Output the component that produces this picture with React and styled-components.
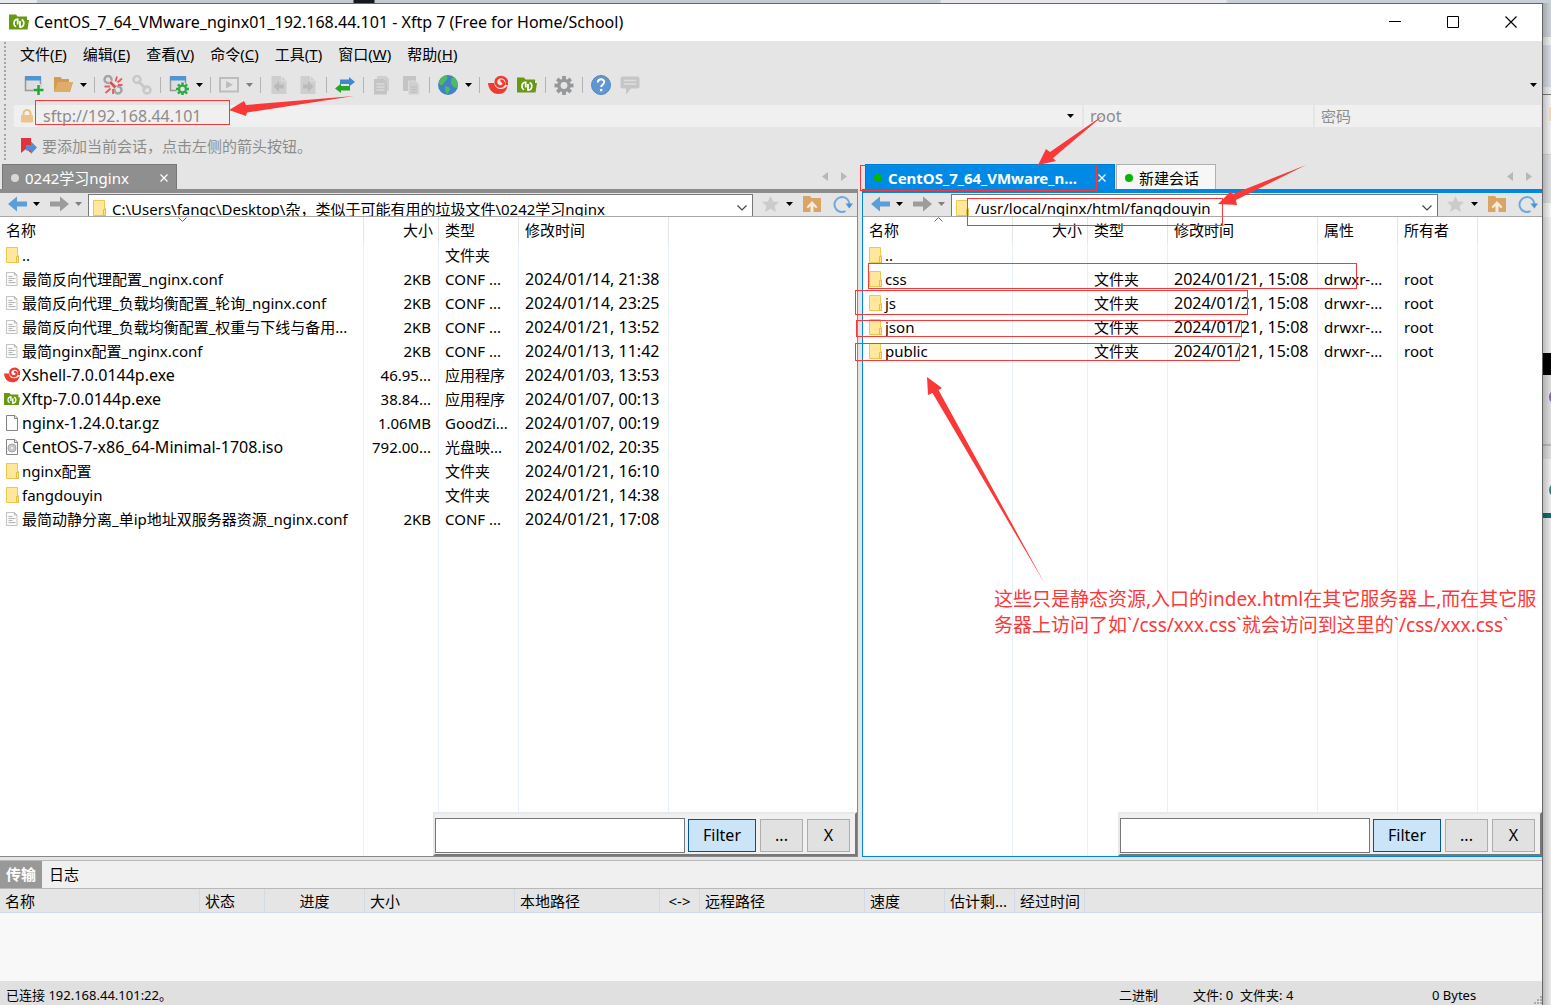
import { useState } from "react";
import styled, { createGlobalStyle } from "styled-components";

const GlobalStyle = createGlobalStyle`
  * {
    box-sizing: border-box;
  }
  body {
    margin: 0;
    overflow: hidden;
    font-family: "Noto Sans", "Noto Sans CJK SC", sans-serif;
    font-size: 15px;
    line-height: 20px;
    color: #000;
  }
  button, input {
    font: inherit;
    color: inherit;
  }
  button {
    background: none;
    border: 0;
    padding: 0;
  }
  svg {
    display: block;
    flex: none;
  }
`;

const Desktop = styled.div`
  position: relative;
  display: flex;
  height: 100vh;
  padding-top: 3px;
  overflow: hidden;
  background: linear-gradient(
    90deg,
    #e8eaed 0 36px,
    #c3cad2 38px 353px,
    #15191f 354px 374px,
    #c3cad2 375px 940px,
    #e4e6e9 941px 1226px,
    #c9cfd7 1228px
  );
`;

const AppWindow = styled.div`
  flex: 1;
  min-width: 0;
  display: flex;
  flex-direction: column;
  background: #e5e5e5;
  border-top: 1px solid #666;
  border-right: 1px solid #666;
`;

// sliver of the windows behind, right of the frame
const Behind = styled.div`
  position: relative;
  flex: none;
  width: 8px;
  overflow: hidden;
  background:
    linear-gradient(90deg, #0003, #0000),
    linear-gradient(
      #ccd2d9 0 34px,
      #eeeeee 34px 42px,
      #d6dae5 42px 84px,
      #eeeeee 84px 91px,
      #777777 91px 92px,
      #f0f0f0 92px 151px,
      #d0d0d0 151px 152px,
      #dcdee2 152px 200px,
      #f6f6f6 200px 214px,
      #ececec 214px 350px,
      #000000 350px 372px,
      #dddddd 372px 441px,
      #bbbbbb 441px 443px,
      #dddddd 443px 456px,
      #eeeeee 456px 510px,
      #0b6f6c 510px 515px,
      #eaeaea 515px
    );
`;

const Blob = styled.span`
  position: absolute;
  left: 6px;
  top: ${(p) => p.$top}px;
  width: 14px;
  height: 14px;
  border-radius: ${(p) => (p.$square ? 0 : "50%")};
  background: ${(p) => p.$color};
`;

const TitleBar = styled.header`
  display: flex;
  align-items: center;
  height: 37px;
  padding: 0 2px 2px 9px;
  gap: 5px;
  background: #fff;
`;

const Title = styled.h1`
  flex: 1;
  margin: 0;
  font-size: 16px;
  font-weight: 400;
  white-space: nowrap;
`;

const WindowButtons = styled.div`
  display: flex;
  align-self: stretch;

  button {
    display: grid;
    place-items: center;
    width: 58px;
  }
`;

const Chrome = styled.div`
  display: flex;
  height: 122px;
  padding-left: 4px;
`;

const Grips = styled.div`
  display: flex;
  flex-direction: column;
  gap: 4px;
  width: 10px;
  padding: 1px 8px 3px 0;

  span {
    background: repeating-linear-gradient(#a6a6a6 0 2px, #e5e5e5 2px 4px);
  }
  span:nth-child(1) {
    flex: 1;
  }
  span:nth-child(n + 2) {
    height: 26px;
  }
`;

const ChromeRows = styled.div`
  flex: 1;
  min-width: 0;
  padding-right: 1px;
`;

const MenuBar = styled.nav`
  display: flex;
  align-items: center;
  gap: 16px;
  height: 28px;
  padding: 0 0 2px 6px;

  button {
    white-space: nowrap;
  }
`;

const ToolBar = styled.div`
  display: flex;
  align-items: center;
  height: 36px;
  padding: 0 1px 4px 5px;
`;

const ToolButton = styled.button`
  display: flex;
  align-items: center;
  justify-content: center;
  width: 29px;
  height: 26px;
`;

const CaretButton = styled.button`
  display: flex;
  align-items: center;
  justify-content: center;
  width: ${(p) => p.$width}px;
  height: 22px;
`;

const Separator = styled.span`
  width: 8px;
  height: 16px;
  background: linear-gradient(90deg, #0000 4px, #b4b4b4 4px 5px, #0000 5px);
`;

const Spacer = styled.span`
  flex: 1;
`;

const SessionBar = styled.form`
  display: grid;
  grid-template-columns: minmax(0, 1068fr) 229px 226px;
  gap: 2px;
  height: 22px;
`;

const SessionField = styled.label`
  display: flex;
  align-items: center;
  min-width: 0;
  padding: 0 8px 0 6px;
  background: #f0f0f0;

  input {
    flex: 1;
    min-width: 0;
    height: 22px;
    padding: 0;
    border: 0;
    outline: 0;
    background: none;
    color: #8c8c8c;
    font-size: ${(p) => (p.$large ? 16 : 15)}px;
  }
  input::placeholder {
    color: #8c8c8c;
    opacity: 1;
  }
  svg + input {
    padding-left: 9px;
  }
`;

const Hint = styled.div`
  display: flex;
  align-items: center;
  gap: 5px;
  height: 36px;
  padding: 2px 0 0 7px;
  color: #8c8c8c;
`;

const Panes = styled.main`
  flex: 1;
  min-height: 0;
  display: grid;
  grid-template-columns: minmax(0, 858fr) minmax(0, 680fr);
  grid-template-rows: minmax(0, 1fr);
  gap: 4px;
`;

const PaneBox = styled.section`
  position: relative;
  display: flex;
  flex-direction: column;
  min-width: 0;
`;

const TabRow = styled.div`
  display: flex;
  align-items: flex-end;
  gap: 1px;
  height: 26px;
  padding: 0 ${(p) => (p.$active ? 10 : 11)}px 0 ${(p) => (p.$active ? 3 : 2)}px;
`;

const tabLooks = {
  grey: "background: #8f8f8f; border-color: #777; color: #fff;",
  blue: "background: #008ae5; border-color: #007acc; color: #fff; font-weight: 700;",
  plain: "background: #f7f7f7; border-color: #b0b0b0; color: #000;",
};

const Tab = styled.div`
  display: flex;
  align-items: center;
  gap: 6px;
  height: 25px;
  min-width: ${(p) => p.$width}px;
  padding: 1px 8px 0 8px;
  border: 1px solid;
  border-bottom: 0;
  white-space: nowrap;
  ${(p) => tabLooks[p.$look]}

  button:first-of-type {
    flex: 1;
    text-align: left;
  }
`;

const Dot = styled.span`
  width: 8px;
  height: 8px;
  border-radius: 50%;
  background: ${(p) => p.$color};
`;

const TabArrows = styled.div`
  display: flex;
  gap: 13px;
  align-self: center;
`;

const PaneBody = styled.div`
  flex: 1;
  min-height: 0;
  display: flex;
  flex-direction: column;
  border: 0 solid ${(p) => (p.$active ? "#0088e0" : "#888")};
  border-width: ${(p) => (p.$active ? "0 0 1px 1px" : "0 1px 1px 0")};
  border-top: 4px solid ${(p) => (p.$active ? "#0088e0" : "#8c8c8c")};
`;

const PathBar = styled.div`
  display: flex;
  flex: none;
  height: 24px;
  overflow: hidden;
  background: #e5e5e5;
  border-bottom: 1px solid #a8a8a8;
`;

const NavGroup = styled.div`
  display: flex;
  gap: ${(p) => p.$gap}px;
  padding: ${(p) => p.$pad};

  > span {
    display: flex;
  }
`;

const NavButton = styled.button`
  display: flex;
  align-items: center;
  justify-content: center;
  width: 27px;
  height: 22px;
`;

const PathBox = styled.div`
  flex: 1;
  min-width: 0;
  display: flex;
  align-items: center;
  gap: 3px;
  height: 28px;
  margin-top: 1px;
  padding: 0 5px 0 2px;
  background: #fff;
  border: 1px solid #777;

  input {
    flex: 1;
    min-width: 0;
    height: 26px;
    padding: 0;
    border: 0;
    outline: 0;
    background: none;
  }
`;

const ListArea = styled.div`
  position: relative;
  flex: 1;
  min-height: 0;
  background: #fff;
`;

const FileTable = styled.table`
  width: 100%;
  height: 100%;
  table-layout: fixed;
  border-collapse: separate;
  border-spacing: 0;

  th, td {
    height: 24px;
    padding: 0 5px 0 6px;
    border-right: 1px solid #e8f1fb;
    text-align: left;
    font-weight: 400;
    white-space: nowrap;
    overflow: hidden;
  }
  th {
    height: 26px;
    border-color: #e5e5e5;
  }
  th:nth-child(2), td:nth-child(2) {
    text-align: right;
  }
  td:nth-child(2) {
    padding-right: 7px;
  }
  td:nth-child(5) {
    font-size: 16px;
  }
  td:nth-child(4) {
    padding-right: 0;
    font-size: 16px;
  }
  td:nth-child(5) {
    font-size: 15px;
  }
  td:first-child {
    padding-right: 0;
  }
  th:last-child, td:last-child {
    border-right: 0;
  }
  tr:last-child td {
    height: auto;
  }
`;

const SortHead = styled.div`
  position: relative;
  height: 26px;
  line-height: 26px;
  margin-right: 9px;

  svg {
    position: absolute;
    top: 0;
    left: 50%;
  }
`;

const FileName = styled.div`
  display: flex;
  align-items: center;
  height: 24px;
  margin-left: -2px;
  font-size: ${(p) => (p.$large ? 16 : 15)}px;
`;

const IconSlot = styled.span`
  flex: none;
  width: 18px;
`;

const FilterBar = styled.form`
  position: absolute;
  right: 0;
  bottom: 0;
  display: flex;
  align-items: center;
  gap: 4px;
  height: 44px;
  padding: 2px 5px 0 0;
  background: #f0f0f0;
  border: 2px solid;
  border-color: #e8e8e8 #777 #777 #e8e8e8;

  input {
    width: 250px;
    height: 35px;
    margin-right: -1px;
    border: 1px solid #777;
    outline: 0;
    background: #fff;
  }
  button {
    width: 43px;
    height: 33px;
    background: #e1e1e1;
    border: 1px solid #adadad;
    font-size: 16px;
  }
  button[type="submit"] {
    width: 68px;
    background: #cce4f7;
    border-color: #005499;
  }
`;

const Transfers = styled.section`
  display: flex;
  flex-direction: column;
  height: 124px;
  padding-top: 3px;
`;

const TransferTabs = styled.div`
  display: flex;
  height: 29px;
  background: #f0f0f0;
  border: solid #b8b8b8;
  border-width: 1px 0;
`;

const TransferTab = styled.button`
  width: ${(p) => (p.$active ? 42 : 44)}px;
  padding-bottom: 2px;
  ${(p) => p.$active && "background: #999; color: #fff; font-weight: 700;"}
`;

const TransferTable = styled.table`
  width: 100%;
  table-layout: fixed;
  border-spacing: 0;

  th {
    height: 24px;
    padding: 0 0 0 5px;
    border-right: 1px solid #d0dae8;
    border-bottom: 1px solid #d0dae8;
    font-weight: 400;
    text-align: left;
    white-space: nowrap;
  }
  th:nth-child(3), th:nth-child(6) {
    padding: 0;
    text-align: center;
  }
  th:last-child {
    border-right: 0;
  }
`;

const TransferBody = styled.div`
  flex: 1;
  background: #f8f8f8;
`;

const StatusBar = styled.footer`
  display: grid;
  grid-template-columns: minmax(0, 1fr) 74px 239px 110px;
  align-items: center;
  height: 24px;
  padding: 4px 0 0 6px;
  background: #e0e0e0;
  font-size: 13px;
  white-space: pre;

  svg {
    position: absolute;
    right: 9px;
    bottom: 0;
  }
`;

const Notes = styled.div`
  position: absolute;
  inset: 0;
  pointer-events: none;
  color: #fb3838;

  > svg {
    position: absolute;
    inset: 0;
  }
`;

const Frame = styled.div`
  position: absolute;
  left: ${(p) => p.$x}px;
  top: ${(p) => p.$y}px;
  width: ${(p) => p.$w}px;
  height: ${(p) => p.$h}px;
  border: 1px solid #fb3838;
`;

const NoteText = styled.p`
  position: absolute;
  left: 994px;
  top: 586px;
  margin: 0;
  font-size: 19px;
  line-height: 26px;
  white-space: nowrap;
`;

/* ---------- icons ---------- */

const Svg = ({ w = 20, h = 20, box, children }) => (
  <svg width={w} height={h} viewBox={box || `0 0 ${w} ${h}`} fill="none" aria-hidden="true">
    {children}
  </svg>
);

const Caret = ({ color = "#000" }) => (
  <Svg w={7} h={4}>
    <path d="M0 0h7L3.500 4z" fill={color} />
  </Svg>
);

const Chevron = () => (
  <Svg w={10} h={6}>
    <path d="M.5.5 5 5 9.5.5" stroke="#444" strokeWidth="1.200" />
  </Svg>
);

const XftpIcon = ({ size = 20 }) => (
  <Svg w={size} h={size} box="0 0 20 20">
    <path d="M0 2.500h7l1.500 2H18v3.500h2l-1.500 9.500H0z" fill="#669a12" />
    <path d="M8.500 7.300C4.500 7.300 3.800 13 7 14.600" stroke="#fff" strokeWidth="1.600" />
    <path d="M8.700 6.500v6M11 9v6.800" stroke="#fff" strokeWidth="1.800" />
    <path d="M11 15.300c4.200 0 5.200-5.800 1.700-7.800" stroke="#fff" strokeWidth="1.600" />
  </Svg>
);

const XshellIcon = ({ size = 20 }) => (
  <Svg w={size} h={size} box="0 0 20 20">
    <path
      d="M0 8h6.200c.4 4.200 3.400 6 6.800 6 2.800 0 5-1.200 6.500-3.500C19 15.800 15.500 19 10.500 19 4 19 .5 14 0 8z"
      fill="#f0392f"
    />
    <path
      d="M18.600 10C20 5 16.500 1.800 13 2c-4.200.3-6 3.600-4.800 6.800 1.200 3 5.400 3.600 7 1.500 1.500-2.200-.2-4.900-2.700-4.200"
      stroke="#f0392f"
      strokeWidth="2.700"
    />
  </Svg>
);

const FolderIcon = () => (
  <Svg w={18} h={18}>
    <path d="M2.500 1.500h11v8h1v7h-12z" fill="#ffe79b" stroke="#edc84f" />
    <path d="M12.500 16.500v-6h2v6z" fill="#ffe290" stroke="#e4bd45" />
  </Svg>
);

const TextFileIcon = () => (
  <Svg w={18} h={18}>
    <path d="M2.500 2.500h8l2.500 2.500v10.500H2.500z" fill="#fafafa" stroke="#c2c2c2" />
    <path d="M10.500 2.500V5H13M4.500 6.500h4M4.500 8.500h7M4.500 10.500h4M4.500 12.500h7" stroke="#b4b4b4" />
  </Svg>
);

const BlankFileIcon = ({ disc }) => (
  <Svg w={18} h={18}>
    <path d="M2.500 1.500h8.500l2.500 2.500v12.500h-11z" fill="#fcfcfc" stroke="#858585" />
    <path d="M10.500 1.500v3h3" stroke="#858585" />
    {disc && (
      <>
        <circle cx="8" cy="10" r="4" fill="#c6c9cc" stroke="#a3a3a3" />
        <circle cx="8" cy="10" r="1.200" fill="#eee" />
      </>
    )}
  </Svg>
);

const fileIcons = {
  folder: <FolderIcon />,
  text: <TextFileIcon />,
  xshell: <XshellIcon size={16} />,
  xftp: <XftpIcon size={16} />,
  blank: <BlankFileIcon />,
  iso: <BlankFileIcon disc />,
};

// teeth laid round a ring, used by both gear icons
const Gear = ({ cx, cy, r, color, hole }) => (
  <g>
    {[0, 45, 90, 135].map((a) => (
      <rect
        key={a}
        x={cx - r * 0.2}
        y={cy - r}
        width={r * 0.4}
        height={r * 2}
        fill={color}
        transform={`rotate(${a} ${cx} ${cy})`}
      />
    ))}
    <circle cx={cx} cy={cy} r={r * 0.7} fill={color} />
    <circle cx={cx} cy={cy} r={r * 0.36} fill={hole} />
  </g>
);

const WindowShape = () => (
  <>
    <path d="M1.500 2.500h15v13h-15z" fill="#dedede" stroke="#999" strokeWidth="1.500" />
    <path d="M1 1h16v4.500H1z" fill="#4f95d3" />
  </>
);

const NewSessionIcon = () => (
  <Svg>
    <WindowShape />
    <path d="M14.500 9v11M9 14.500h11" stroke="#e5e5e5" strokeWidth="4.500" />
    <path d="M14.500 10v10M9.500 15h10" stroke="#21a637" strokeWidth="2.500" />
  </Svg>
);

const OpenIcon = () => (
  <Svg>
    <path d="M1 2h6.500l1.500 2h7v3h4l-3 10H1z" fill="#d39b51" />
    <path d="M5 7h15l-4 10H1z" fill="#e0ad68" />
  </Svg>
);

const ChainIcon = ({ broken }) => (
  <Svg>
    <circle cx="5" cy="4.500" r="3.500" stroke={broken ? "#a3a3a3" : "#c8c8c8"} strokeWidth="2.500" />
    <circle cx="15" cy="15" r="3.500" stroke={broken ? "#a3a3a3" : "#c8c8c8"} strokeWidth="2.500" />
    {broken ? (
      <>
        <path d="m6.500 6 7 7.500" stroke="#e5e5e5" strokeWidth="3" />
        <path
          d="M12.500 6.500l1.500-5M14.500 7.500l4.500-4M15 10h4.500M7 11.500H1.500M7.500 13.500l-5 4.500M10 14v5"
          stroke="#ea5a5d"
          strokeWidth="1.800"
        />
        <path d="m7 7 5.500 5.500" stroke="#e8484c" strokeWidth="2.600" />
      </>
    ) : (
      <path d="m6 6 8 8" stroke="#c8c8c8" strokeWidth="3" />
    )}
  </Svg>
);

const PropertiesIcon = () => (
  <Svg>
    <WindowShape />
    <circle cx="13.500" cy="14" r="6.500" fill="#e5e5e5" />
    <Gear cx={13.5} cy={14} r={6.5} color="#35a845" hole="#e5e5e5" />
  </Svg>
);

const PlayIcon = () => (
  <Svg>
    <path d="M1 3h18v13.500H1z" stroke="#bdbdbd" strokeWidth="2" />
    <path d="M7 6v7.500l7-3.700z" fill="#bdbdbd" />
  </Svg>
);

const DocArrowIcon = ({ flip }) => (
  <Svg>
    <path d="M2.500 1h10l5 5v13h-15z" fill="#cecece" />
    <path d="M12.500 1v5h5" stroke="#e0e0e0" />
    <path
      d={flip ? "M5 9.500h5V6l5.500 5.500L10 17v-3.500H5z" : "M15 9.500h-5V6l-5.500 5.500L10 17v-3.500h5z"}
      fill="#bababa"
    />
  </Svg>
);

const SyncIcon = () => (
  <Svg>
    <path d="M5 4.500h9V2l6 5-6 4.500V9H5z" fill="#4187cf" />
    <path d="M15 11H6V8.500L0 13.500 6 18v-2.500h9z" fill="#29a329" />
  </Svg>
);

const CopyIcon = () => (
  <Svg>
    <path d="M5 1h9l3 3v12H5z" fill="#cfcfcf" />
    <path d="M2 4h9.500L15 7v12.500H2z" fill="#c4c4c4" />
    <path d="M4.500 9h8M4.500 12h8M4.500 15h8" stroke="#dadada" strokeWidth="1.500" />
  </Svg>
);

const PasteIcon = () => (
  <Svg>
    <path d="M2 1h13v15H2z" fill="#c4c4c4" />
    <path d="M7.500 6h7L18 9.500v10H7.500z" fill="#cfcfcf" stroke="#dcdcdc" />
    <path d="M10 12h6M10 14.500h6M10 17h6" stroke="#bdbdbd" />
  </Svg>
);

const GlobeIcon = () => (
  <Svg>
    <circle cx="10" cy="10" r="10" fill="#4181c4" />
    <path d="M3 3c2-2 4-2.500 6-2.500l.5 3-2 2.500-1.500 2-1.500 2L2 10 .8 7.500z" fill="#4cbb62" />
    <path d="M7 11l4 1 1 2.500-2.500 4.500-2-2z" fill="#4cbb62" />
    <path d="M13.500 3l3-.5c2 1.700 3.300 4.500 3.300 7l-1.500 3.500-3-1-2.500-4z" fill="#4cbb62" />
  </Svg>
);

const OptionsIcon = () => (
  <Svg>
    <Gear cx={10} cy={10.5} r={9.5} color="#96989b" hole="#e5e5e5" />
  </Svg>
);

const HelpIcon = () => (
  <Svg>
    <circle cx="10" cy="10" r="9.500" fill="#5f97d3" stroke="#4f88c6" />
    <path d="M6.800 7.500c0-4.300 6.600-4 6.400-.2-.1 2.200-3 2.200-3 4.700" stroke="#fff" strokeWidth="2" />
    <path d="M9 14h2.300v2.300H9z" fill="#fff" />
  </Svg>
);

const ChatIcon = () => (
  <Svg>
    <path d="M2.500 1.500h15a2 2 0 0 1 2 2v8a2 2 0 0 1-2 2H11l-5 6v-6H2.500a2 2 0 0 1-2-2v-8a2 2 0 0 1 2-2z" fill="#c6c6c6" />
    <path d="M4 5.500h12M4 9h12" stroke="#dedede" strokeWidth="1.500" />
  </Svg>
);

const LockIcon = () => (
  <Svg w={14} h={14}>
    <path d="M3.500 7V4.500a3.500 3.500 0 0 1 7 0V7" stroke="#e8c084" strokeWidth="2" />
    <rect x="1" y="6" width="12" height="7.500" rx="1" fill="#ecc48a" />
  </Svg>
);

const FlagIcon = () => (
  <Svg w={16} h={18}>
    <path d="M0 1h10v15l-5-4-5 4z" fill="#e23338" />
    <path d="M5 8h5V4.500l6 6-6 6.500v-3.500H5z" fill="#4f8fd2" />
  </Svg>
);

const NavArrow = ({ flip, color }) => (
  <Svg w={19} h={16}>
    <path d={flip ? "M0 5.500h10V.5L19 8l-9 7.500v-5H0z" : "M19 5.500H9V.5L0 8l9 7.500v-5h10z"} fill={color} />
  </Svg>
);

const StarIcon = () => (
  <Svg w={17} h={16}>
    <path d="M8.500 0 11 5.500l6 .5-4.500 4 1.500 6-5.500-3.200L3 16l1.500-6L0 6l6-.5z" fill="#cbcbcb" />
  </Svg>
);

const UpFolderIcon = () => (
  <Svg w={18} h={16}>
    <path d="M0 0h7l1.500 2H18v14H0z" fill="#d9a566" />
    <path d="M9 5l5.500 6-1.500 1.300-2.500-2.300v6h-3v-6L5 12.300 3.500 11z" fill="#f6ece0" />
  </Svg>
);

const RefreshIcon = () => (
  <Svg w={20} h={18}>
    <path d="M12.500 16.200A7.500 7.500 0 1 1 16.500 9" stroke="#72a8dc" strokeWidth="2" />
    <path d="M12.500 8.500H20l-3.700 5z" fill="#4d94d6" />
  </Svg>
);

/* ---------- data ---------- */

const menus = [
  ["文件", "F"],
  ["编辑", "E"],
  ["查看", "V"],
  ["命令", "C"],
  ["工具", "T"],
  ["窗口", "W"],
  ["帮助", "H"],
];

const tools = [
  { label: "新建", icon: <NewSessionIcon /> },
  { label: "打开", icon: <OpenIcon />, caret: "#000" },
  "|",
  { label: "断开", icon: <ChainIcon broken /> },
  { label: "重新连接", icon: <ChainIcon /> },
  "|",
  { label: "属性", icon: <PropertiesIcon />, caret: "#000" },
  "|",
  { label: "传输", icon: <PlayIcon />, caret: "#808080" },
  "|",
  { label: "下载", icon: <DocArrowIcon /> },
  { label: "上传", icon: <DocArrowIcon flip /> },
  "|",
  { label: "同步", icon: <SyncIcon /> },
  "|",
  { label: "复制", icon: <CopyIcon /> },
  { label: "粘贴", icon: <PasteIcon /> },
  "|",
  { label: "语言", icon: <GlobeIcon />, caret: "#000" },
  "|",
  { label: "Xshell", icon: <XshellIcon /> },
  { label: "Xftp", icon: <XftpIcon /> },
  "|",
  { label: "选项", icon: <OptionsIcon /> },
  "|",
  { label: "帮助", icon: <HelpIcon /> },
  { label: "反馈", icon: <ChatIcon /> },
];

const localFiles = [
  ["folder", "..", "", "文件夹", ""],
  ["text", "最简反向代理配置_nginx.conf", "2KB", "CONF ...", "2024/01/14, 21:38"],
  ["text", "最简反向代理_负载均衡配置_轮询_nginx.conf", "2KB", "CONF ...", "2024/01/14, 23:25"],
  ["text", "最简反向代理_负载均衡配置_权重与下线与备用...", "2KB", "CONF ...", "2024/01/21, 13:52"],
  ["text", "最简nginx配置_nginx.conf", "2KB", "CONF ...", "2024/01/13, 11:42"],
  ["xshell", "Xshell-7.0.0144p.exe", "46.95...", "应用程序", "2024/01/03, 13:53"],
  ["xftp", "Xftp-7.0.0144p.exe", "38.84...", "应用程序", "2024/01/07, 00:13"],
  ["blank", "nginx-1.24.0.tar.gz", "1.06MB", "GoodZi...", "2024/01/07, 00:19"],
  ["iso", "CentOS-7-x86_64-Minimal-1708.iso", "792.00...", "光盘映...", "2024/01/02, 20:35"],
  ["folder", "nginx配置", "", "文件夹", "2024/01/21, 16:10"],
  ["folder", "fangdouyin", "", "文件夹", "2024/01/21, 14:38"],
  ["text", "最简动静分离_单ip地址双服务器资源_nginx.conf", "2KB", "CONF ...", "2024/01/21, 17:08"],
];

const remoteFiles = [
  ["folder", "..", "", "", "", "", ""],
  ...["css", "js", "json", "public"].map((name) => [
    "folder", name, "", "文件夹", "2024/01/21, 15:08", "drwxr-...", "root",
  ]),
];

const localColumns = [["名称", 364], ["大小", 75], ["类型", 80], ["修改时间", 150]];
const remoteColumns = [
  ["名称", 150], ["大小", 75], ["类型", 80], ["修改时间", 150], ["属性", 80], ["所有者", 80],
];

const transferColumns = [
  ["名称", 200], ["状态", 65], ["进度", 100], ["大小", 150], ["本地路径", 145],
  ["<->", 40], ["远程路径", 165], ["速度", 80], ["估计剩...", 70], ["经过时间", 70],
];

/* ---------- parts ---------- */

const CloseMark = ({ size = 8 }) => (
  <Svg w={size} h={size}>
    <path d={`M.5.5 ${size - 0.5} ${size - 0.5}M${size - 0.5}.5.5 ${size - 0.5}`} stroke="currentColor" strokeWidth="1.200" />
  </Svg>
);

const FileList = ({ columns, files, sortUp }) => (
  <FileTable>
    <colgroup>
      {columns.map(([name, width]) => (
        <col key={name} style={{ width }} />
      ))}
      <col />
    </colgroup>
    <thead>
      <tr>
        {columns.map(([name], i) => (
          <th key={name}>
            {i === 0 ? (
              <SortHead>
                {name}
                <Svg w={9} h={5}>
                  <path d={sortUp ? "M.5 4.500l4-4 4 4" : "M.5.5l4 4 4-4"} stroke="#666" />
                </Svg>
              </SortHead>
            ) : (
              name
            )}
          </th>
        ))}
        <th />
      </tr>
    </thead>
    <tbody>
      {files.map(([icon, name, ...rest]) => (
        <tr key={name}>
          <td>
            <FileName $large={/^[\w.-]*\d[\w.-]*$/.test(name)}>
              <IconSlot>{fileIcons[icon]}</IconSlot>
              {name}
            </FileName>
          </td>
          {rest.map((cell, i) => (
            <td key={i}>{cell}</td>
          ))}
          <td />
        </tr>
      ))}
      <tr>
        {columns.map(([name]) => (
          <td key={name} />
        ))}
        <td />
      </tr>
    </tbody>
  </FileTable>
);

const Pane = ({ active, tabs, path, columns, files }) => {
  const [value, setValue] = useState(path);
  const [filter, setFilter] = useState("");

  return (
    <PaneBox>
      <TabRow $active={active}>
        {tabs.map((tab) => (
          <Tab key={tab.name} $look={tab.look} $width={tab.width}>
            <Dot $color={tab.dot} />
            <button>{tab.name}</button>
            {tab.closable && (
              <button aria-label="关闭">
                <CloseMark />
              </button>
            )}
          </Tab>
        ))}
        <Spacer />
        <TabArrows>
          <button aria-label="上一个">
            <Svg w={6} h={9}>
              <path d="M6 0v9L0 4.500z" fill="#b8b8b8" />
            </Svg>
          </button>
          <button aria-label="下一个">
            <Svg w={6} h={9}>
              <path d="M0 0v9l6-4.500z" fill="#b8b8b8" />
            </Svg>
          </button>
        </TabArrows>
      </TabRow>
      <PaneBody $active={active}>
        <PathBar>
          <NavGroup $gap={5} $pad="0 5px 0 4px">
            <span>
              <NavButton aria-label="后退"><NavArrow color="#5b9fd8" /></NavButton>
              <CaretButton $width={10} aria-label="后退历史"><Caret /></CaretButton>
            </span>
            <span>
              <NavButton aria-label="前进"><NavArrow flip color="#9c9c9c" /></NavButton>
              <CaretButton $width={10} aria-label="前进历史"><Caret color="#808080" /></CaretButton>
            </span>
          </NavGroup>
          <PathBox>
            <FolderIcon />
            <input aria-label="路径" value={value} onChange={(e) => setValue(e.target.value)} />
            <button aria-label="历史路径"><Chevron /></button>
          </PathBox>
          <NavGroup $gap={4} $pad="0 1px 0 4px">
            <span>
              <NavButton aria-label="收藏"><StarIcon /></NavButton>
              <CaretButton $width={10} aria-label="收藏夹"><Caret /></CaretButton>
            </span>
            <NavButton aria-label="上级"><UpFolderIcon /></NavButton>
            <NavButton aria-label="刷新"><RefreshIcon /></NavButton>
          </NavGroup>
        </PathBar>
        <ListArea>
          <FileList columns={columns} files={files} sortUp={active} />
          <FilterBar onSubmit={(e) => e.preventDefault()}>
            <input aria-label="Filter" value={filter} onChange={(e) => setFilter(e.target.value)} />
            <button type="submit">Filter</button>
            <button type="button">...</button>
            <button type="button" onClick={() => setFilter("")}>X</button>
          </FilterBar>
        </ListArea>
      </PaneBody>
    </PaneBox>
  );
};

function App() {
  return (
    <Desktop>
      <GlobalStyle />
      <AppWindow>
        <TitleBar>
          <XftpIcon />
          <Title>CentOS_7_64_VMware_nginx01_192.168.44.101 - Xftp 7 (Free for Home/School)</Title>
          <WindowButtons>
            <button aria-label="最小化">
              <Svg w={12} h={12}>
                <path d="M0 5.500h12" stroke="#000" />
              </Svg>
            </button>
            <button aria-label="最大化">
              <Svg w={12} h={12}>
                <path d="M.5.5h11v11H.5z" stroke="#000" />
              </Svg>
            </button>
            <button aria-label="关闭">
              <CloseMark size={12} />
            </button>
          </WindowButtons>
        </TitleBar>

        <Chrome>
          <Grips>
            <span />
            <span />
            <span />
          </Grips>
          <ChromeRows>
            <MenuBar>
              {menus.map(([name, key]) => (
                <button key={key}>
                  {name}(<u>{key}</u>)
                </button>
              ))}
            </MenuBar>
            <ToolBar>
              {tools.map((tool, i) =>
                tool === "|" ? (
                  <Separator key={i} />
                ) : (
                  [
                    <ToolButton key={tool.label} aria-label={tool.label}>
                      {tool.icon}
                    </ToolButton>,
                    tool.caret && (
                      <CaretButton key={tool.label + "-more"} $width={13} aria-label={tool.label + "选项"}>
                        <Caret color={tool.caret} />
                      </CaretButton>
                    ),
                  ]
                )
              )}
              <Spacer />
              <CaretButton $width={13} aria-label="更多">
                <Caret />
              </CaretButton>
            </ToolBar>
            <SessionBar>
              <SessionField $large>
                <LockIcon />
                <input aria-label="地址" defaultValue="sftp://192.168.44.101" />
                <Caret />
              </SessionField>
              <SessionField $large>
                <input aria-label="用户名" defaultValue="root" />
              </SessionField>
              <SessionField>
                <input aria-label="密码" type="password" placeholder="密码" />
              </SessionField>
            </SessionBar>
            <Hint>
              <FlagIcon />
              要添加当前会话，点击左侧的箭头按钮。
            </Hint>
          </ChromeRows>
        </Chrome>

        <Panes>
          <Pane
            tabs={[{ name: "0242学习nginx", look: "grey", dot: "#d8d8d8", width: 175, closable: true }]}
            path="C:\Users\fangc\Desktop\杂，类似于可能有用的垃圾文件\0242学习nginx"
            columns={localColumns}
            files={localFiles}
          />
          <Pane
            active
            tabs={[
              { name: "CentOS_7_64_VMware_n...", look: "blue", dot: "#00b800", width: 250, closable: true },
              { name: "新建会话", look: "plain", dot: "#00b800", width: 100 },
            ]}
            path="/usr/local/nginx/html/fangdouyin"
            columns={remoteColumns}
            files={remoteFiles}
          />
        </Panes>

        <Transfers>
          <TransferTabs>
            <TransferTab $active>传输</TransferTab>
            <TransferTab>日志</TransferTab>
          </TransferTabs>
          <TransferTable>
            <colgroup>
              {transferColumns.map(([name, width]) => (
                <col key={name} style={{ width }} />
              ))}
              <col />
            </colgroup>
            <thead>
              <tr>
                {transferColumns.map(([name]) => (
                  <th key={name}>{name}</th>
                ))}
                <th />
              </tr>
            </thead>
          </TransferTable>
          <TransferBody />
        </Transfers>

        <StatusBar>
          <span>已连接 192.168.44.101:22。</span>
          <span>二进制</span>
          <span>{"文件: 0  文件夹: 4"}</span>
          <span>0 Bytes</span>
          <Svg w={9} h={9}>
            <path d="M7 1h2M4 4h2M7 4h2M1 7h2M4 7h2M7 7h2" stroke="#aaa" strokeWidth="2" />
          </Svg>
        </StatusBar>
      </AppWindow>

      <Behind>
        <Blob $top={104} $color="#f3d998" $square />
        <Blob $top={387} $color="#7a5cb8" />
        <Blob $top={480} $color="#1b8a7c" />
      </Behind>

      <Notes>
        <Svg w={1551} h={1005}>
          <g fill="#fb3838">
            <path d="M229 110 244 101 246 105 354 96 247 112.500 246 116z" />
            <path d="M1038 165 1046 149 1050 152 1105 114 1053 158 1056 161z" />
            <path d="M1218 204 1231 191 1233 194 1306 165 1236 200 1237 205z" />
            <path d="M927 377 942 388 938.500 390 1045 584 932.500 393 928 395z" />
          </g>
        </Svg>
        <Frame $x={35} $y={100} $w={195} $h={25} />
        <Frame $x={860} $y={165} $w={237} $h={26} />
        <Frame $x={967} $y={198} $w={256} $h={28} />
        <Frame $x={868} $y={263} $w={489} $h={26} />
        <Frame $x={855} $y={290} $w={393} $h={25} />
        <Frame $x={856} $y={320} $w={386} $h={17} />
        <Frame $x={855} $y={343} $w={385} $h={18} />
        <NoteText>
          这些只是静态资源,入口的index.html在其它服务器上,而在其它服
          <br />
          务器上访问了如`/css/xxx.css`就会访问到这里的`/css/xxx.css`
        </NoteText>
      </Notes>
    </Desktop>
  );
}

export default App;
